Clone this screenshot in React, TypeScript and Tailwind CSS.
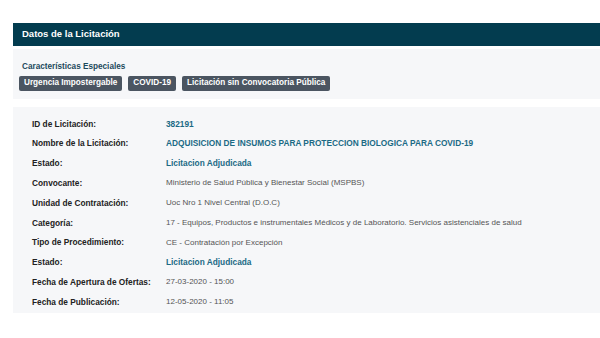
const rows: { label: string; value: string; link?: boolean }[] = [
  { label: "ID de Licitación:", value: "382191", link: true },
  { label: "Nombre de la Licitación:", value: "ADQUISICION DE INSUMOS PARA PROTECCION BIOLOGICA PARA COVID-19", link: true },
  { label: "Estado:", value: "Licitacion Adjudicada", link: true },
  { label: "Convocante:", value: "Ministerio de Salud Pública y Bienestar Social (MSPBS)" },
  { label: "Unidad de Contratación:", value: "Uoc Nro 1 Nivel Central (D.O.C)" },
  { label: "Categoría:", value: "17 - Equipos, Productos e instrumentales Médicos y de Laboratorio. Servicios asistenciales de salud" },
  { label: "Tipo de Procedimiento:", value: "CE - Contratación por Excepción" },
  { label: "Estado:", value: "Licitacion Adjudicada", link: true },
  { label: "Fecha de Apertura de Ofertas:", value: "27-03-2020 - 15:00" },
  { label: "Fecha de Publicación:", value: "12-05-2020 - 11:05" },
];

const badges = ["Urgencia Impostergable", "COVID-19", "Licitación sin Convocatoria Pública"];

export default function App() {
  return (
    <div className="w-[600px] h-[338px] bg-white overflow-hidden [font-family:'Liberation_Sans',Arial,sans-serif]">
      <div className="ml-[13px] pt-[23px]">
        <div className="h-[23px] bg-[#033c4f] flex items-center pl-[9px]">
          <span className="text-white font-bold text-[9.5px]">Datos de la Licitación</span>
        </div>
        <div className="mt-[3px] h-[50px] bg-[#f6f7f9] pl-[6px] pt-[13px]">
          <div className="text-[#1d4a5c] font-bold text-[8.2px] leading-[10px] pl-[3px]">Características Especiales</div>
          <div className="flex gap-[6px] mt-[4px]">
            {badges.map((b) => (
              <span key={b} className="h-[15px] px-[5px] rounded-[2px] bg-[#4b5561] text-white font-bold text-[8.2px] flex items-center">
                {b}
              </span>
            ))}
          </div>
        </div>
        <div className="mt-[8px] h-[206px] bg-[#f6f7f9] pl-[19px] pt-[7px]">
          {rows.map((r, i) => (
            <div key={i} className="flex h-[19.8px] items-center">
              <span className="w-[134px] font-bold text-[#222] text-[8.3px]">{r.label}</span>
              <span className={r.link ? "font-bold text-[#1b6a85] text-[8.3px]" : "text-[#555] text-[8px]"}>{r.value}</span>
            </div>
          ))}
        </div>
      </div>
    </div>
  );
}
